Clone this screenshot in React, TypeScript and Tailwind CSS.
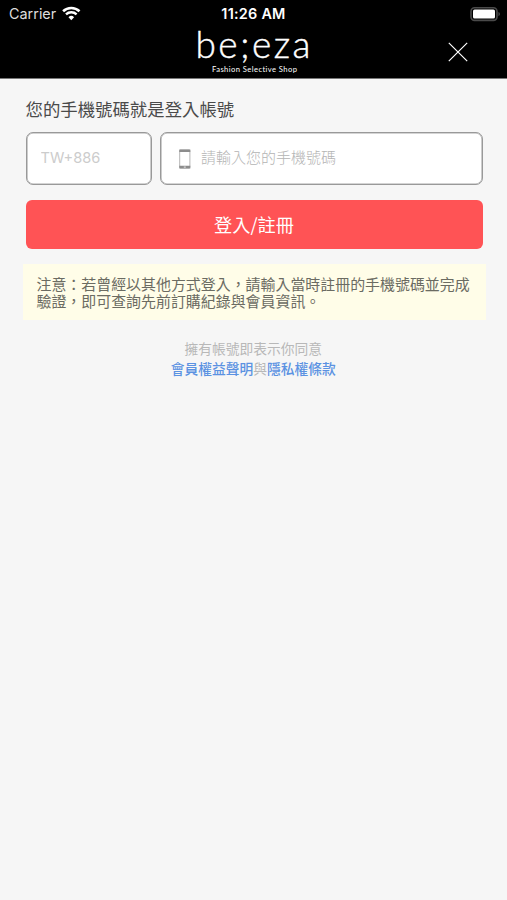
import React, { useState } from 'react'

const WifiIcon = () => (
  <svg width="19" height="15" viewBox="0 0 19 15" fill="none">
    <path d="M1.1 5.2a12 12 0 0 1 16.4 0" stroke="#fff" strokeWidth="2.6" />
    <path d="M4 8.4a7.6 7.6 0 0 1 10.6 0" stroke="#fff" strokeWidth="2.4" />
    <path d="M6.5 11.2a4 4 0 0 1 5.6 0L9.3 14.2z" fill="#fff" />
  </svg>
)

const BatteryIcon = () => (
  <svg width="31" height="15" viewBox="0 0 31 15">
    <rect x="1" y="0.8" width="26" height="12.6" rx="3.6" fill="#000" stroke="#4a4a4a" strokeWidth="1.6" />
    <rect x="3" y="2.6" width="22" height="8.9" rx="1.6" fill="#fff" />
    <path d="M28.5 5c1.8.6 1.8 3.6 0 4.2z" fill="#555" />
  </svg>
)

const Logo = () => (
  <svg
    className="overflow-visible"
    width="116"
    height="48"
    viewBox="0 0 116 48"
    fill="#fff"
    fontFamily="Lato, sans-serif"
  >
    <text x="-0.5" y="30" fontSize="37" fontWeight="300" stroke="#fff" strokeWidth="0.4" textLength="115" lengthAdjust="spacing">
      be;eza
    </text>
    <text className="[font-variant-ligatures:none]" x="16" y="44" fontSize="7.6" textLength="85" lengthAdjust="spacing">
      Fashion Selective Shop
    </text>
  </svg>
)

const PhoneIcon = () => (
  <svg width="12" height="20" viewBox="0 0 12 20">
    <rect x="0.7" y="1" width="10.2" height="18" rx="0.8" fill="#fff" stroke="#b5b5b5" />
    <path d="M.3.6h11v2.3H.3zM.3 16.8h11v2.6H.3z" fill="#8c8c8c" />
    <path d="M4.8 18.1h2" stroke="#fff" strokeWidth="0.8" />
  </svg>
)

const Header = () => (
  <header className="h-[79px] border-b border-[#777] bg-black text-white">
    <div className="grid h-7 grid-cols-3 items-center pr-[6px] pl-[9px] font-['Inter','Liberation_Sans',sans-serif]">
      <div className="flex items-center gap-[6px] text-[14.4px] text-[#ddd]">
        Carrier
        <WifiIcon />
      </div>
      <div className="pr-[3px] text-center text-[14.4px] leading-5 font-semibold tracking-[0.25px] whitespace-nowrap">
        11:26 AM
      </div>
      <div className="flex justify-end">
        <BatteryIcon />
      </div>
    </div>
    <div className="grid grid-cols-[1fr_116px_1fr]">
      <div />
      <Logo />
      <button type="button" aria-label="close" className="mt-[14px] mr-[39px] h-5 w-5 justify-self-end">
        <svg width="20" height="20" viewBox="0 0 20 20" stroke="#fff" strokeWidth="1.2">
          <path d="M.8.8l18.4 18.4M19.2.8L.8 19.2" />
        </svg>
      </button>
    </div>
  </header>
)

const App = () => {
  const [country, setCountry] = useState('')
  const [phone, setPhone] = useState('')

  return (
    <div className="min-h-screen w-full bg-[#f6f6f6] font-['Noto_Sans_CJK_TC',sans-serif]">
      <Header />
      <main className="pt-[18px] pr-[24.5px] pl-[25.5px]">
        <h1 className="text-[17.4px] leading-6 font-normal text-[#4a4a4a]">
          您的手機號碼就是登入帳號
        </h1>
        <form onSubmit={(e) => e.preventDefault()}>
          <div className="mt-[11px] flex gap-2">
            <input
              className="h-[53px] w-[126.5px] rounded-[7px] border border-[#999] bg-white pb-[2px] pl-[14px] font-['Inter',sans-serif] text-[14.6px] shadow-[inset_0_0_0_0.6px_#aaa] placeholder:text-[#ccc]"
              placeholder="TW+886"
              value={country}
              onChange={(e) => setCountry(e.target.value)}
            />
            <div className="flex h-[53px] min-w-0 flex-1 items-center rounded-[7px] border border-[#999] bg-white pl-[18px] shadow-[inset_0_0_0_0.6px_#aaa]">
              <PhoneIcon />
              <input
                className="ml-[10px] min-w-0 flex-1 pb-[2px] text-[15px] font-light placeholder:text-[#b4b4b4]"
                placeholder="請輸入您的手機號碼"
                value={phone}
                onChange={(e) => setPhone(e.target.value)}
              />
            </div>
          </div>
          <button
            type="submit"
            className="mt-[15px] h-[49px] w-full rounded-[6px] bg-[#ff5355] text-[18.2px] font-normal text-white"
          >
            登入/註冊
          </button>
        </form>
        <p className="-mx-[3px] mt-[15px] h-[56px] bg-[#fffde8] pt-[11px] pl-[14px] text-[14.95px] leading-[17px] whitespace-nowrap text-[#6b6b62]">
          注意：若曾經以其他方式登入，請輸入當時註冊的手機號碼並完成
          <br />
          驗證，即可查詢先前訂購紀錄與會員資訊。
        </p>
        <div className="mt-[19px] pr-[1.5px] text-center text-[13.75px] leading-[19.5px] text-[#b8b8b8]">
          <p>擁有帳號即表示你同意</p>
          <p>
            <a className="font-medium text-[#5b92e2]">會員權益聲明</a>與
            <a className="font-medium text-[#5b92e2]">隱私權條款</a>
          </p>
        </div>
      </main>
    </div>
  )
}

export default App
